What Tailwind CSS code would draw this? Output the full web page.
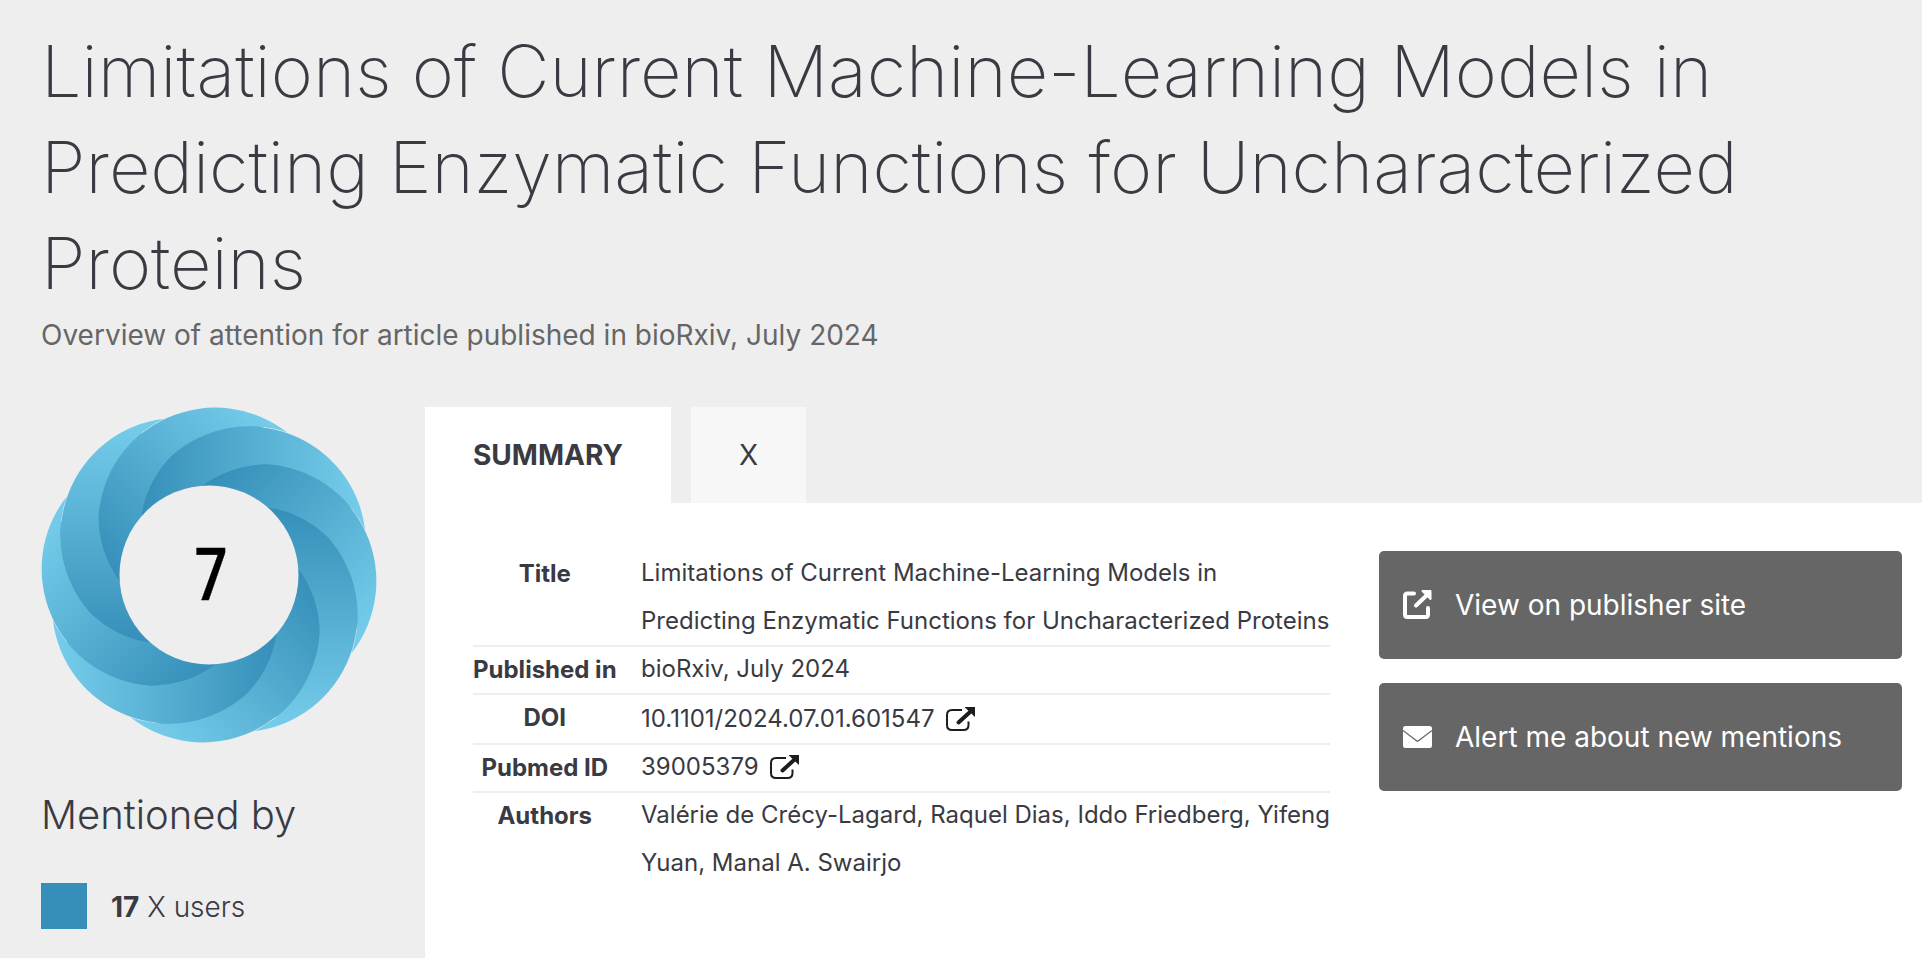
<!DOCTYPE html>
<html lang="en">
<head>
<meta charset="utf-8">
<title>Overview of attention</title>
<script src="https://cdn.jsdelivr.net/npm/@tailwindcss/browser@4"></script>
</head>
<body class="h-screen overflow-hidden bg-[#eeeeee] font-['Inter',sans-serif] text-[#3a3a42] flex flex-col">
<header class="pl-[41px] pt-[23px] h-[407px] shrink-0">
  <h1 class="text-[72px] leading-[96px] font-extralight">Limitations of Current Machine-Learning Models in<br>Predicting Enzymatic Functions for Uncharacterized<br>Proteins</h1>
  <p class="mt-px text-[28px] leading-[46px] text-[#666666]">Overview of attention for article published in bioRxiv, July 2024</p>
</header>
<div class="flex flex-1 min-h-0">
  <aside class="w-[425px] shrink-0 pl-[41px]">
    <svg class="block w-[336px] h-[336px]" viewBox="-168 -168 336 336">
      <defs>
        <linearGradient id="g" gradientUnits="userSpaceOnUse" x1="-18.9" y1="65.3" x2="43.2" y2="-150"><stop offset="0" stop-color="#368fb9"/><stop offset="1" stop-color="#76cdeb"/></linearGradient>
        <path id="r" fill="url(#g)" d="M0-162.5A117 117 0 0 0-124.9 2.7A108 108 0 0 0-30.3 58.5L-62.8 19.9A108 108 0 0 1-90.2-86.4A117 117 0 0 1 0-162.5Z"/>
      </defs>
      <circle r="157" fill="#55aad0"/>
      <use href="#r" transform="rotate(28.9)"/><use href="#r" transform="rotate(73.9)"/><use href="#r" transform="rotate(118.9)"/><use href="#r" transform="rotate(163.9)"/><use href="#r" transform="rotate(208.9)"/><use href="#r" transform="rotate(253.9)"/><use href="#r" transform="rotate(298.9)"/><use href="#r" transform="rotate(343.9)"/>
      <circle r="89.5" fill="#eeeeee"/>
      <text transform="translate(2 24.5) scale(.8 1)" text-anchor="middle" font-family="Roboto, sans-serif" font-weight="500" font-size="72" fill="#000" stroke="#000" stroke-width=".5">7</text>
    </svg>
    <h2 class="mt-[48px] text-[40px] leading-[48px] font-light">Mentioned by</h2>
    <div class="mt-[44px] flex items-start gap-6 text-[28px] leading-[46px] font-light"><span class="size-[46px] bg-[#368fb9]"></span><span class="pt-px"><b class="font-bold">17</b> X users</span></div>
  </aside>
  <main class="flex-1 flex flex-col">
    <nav class="flex gap-5 h-24 shrink-0 text-[28px] leading-[96px]">
      <a class="w-[246px] text-center bg-white font-bold">SUMMARY</a>
      <a class="w-[115px] text-center bg-[#f7f7f7]">X</a>
    </nav>
    <div class="flex-1 bg-white pl-12 pt-[46px] pr-5 flex justify-between items-start">
      <dl class="w-[857px] text-[24px] leading-[48px] whitespace-nowrap">
        <div class="flex gap-[24.5px] h-[98px] border-b-2 border-[#eeeeee]"><dt class="w-[143.5px] pt-px text-center font-bold">Title</dt><dd>Limitations of Current Machine-Learning Models in<br>Predicting Enzymatic Functions for Uncharacterized Proteins</dd></div>
        <div class="flex gap-[24.5px] h-[48px] border-b-2 border-[#eeeeee] leading-[44px]"><dt class="w-[143.5px] pt-px text-center font-bold">Published in</dt><dd>bioRxiv, July 2024</dd></div>
        <div class="flex gap-[24.5px] h-[50px] border-b-2 border-[#eeeeee]"><dt class="w-[143.5px] text-center font-bold leading-[46px]">DOI</dt><dd class="flex gap-3">10.1101/2024.07.01.601547
          <svg class="w-[30px] h-[24px] mt-3" viewBox="0 0 30 24"><path d="M16 3H6Q1 3 1 8V18Q1 23 6 23H17.500Q22.500 23 22.500 18V14.500" fill="none" stroke="#1d1d1f" stroke-width="2"/><path d="M12.500 15.500L24 5" stroke="#1d1d1f" stroke-width="4" stroke-linecap="round"/><path d="M18.500 0H29V10Z" fill="#1d1d1f"/></svg></dd></div>
        <div class="flex gap-[24.5px] h-[48px] border-b-2 border-[#eeeeee] leading-[44px]"><dt class="w-[143.5px] pt-px text-center font-bold">Pubmed ID</dt><dd class="flex gap-[11px]">39005379
          <svg class="w-[30px] h-[24px] mt-[10px]" viewBox="0 0 30 24"><path d="M16 3H6Q1 3 1 8V18Q1 23 6 23H17.500Q22.500 23 22.500 18V14.500" fill="none" stroke="#1d1d1f" stroke-width="2"/><path d="M12.500 15.500L24 5" stroke="#1d1d1f" stroke-width="4" stroke-linecap="round"/><path d="M18.500 0H29V10Z" fill="#1d1d1f"/></svg></dd></div>
        <div class="flex gap-[24.5px] -mt-0.5"><dt class="w-[143.5px] pt-px text-center font-bold">Authors</dt><dd>Valérie de Crécy-Lagard, Raquel Dias, Iddo Friedberg, Yifeng<br>Yuan, Manal A. Swairjo</dd></div>
      </dl>
      <div class="w-[523px] mt-0.5 flex flex-col gap-6 text-white text-[28px]">
        <a class="h-[108px] bg-[#666666] rounded-[5px] flex items-center pl-6 gap-[23px]">
          <svg class="w-[29px] h-[29px] mb-px" viewBox="0 0 29 29" fill="none" stroke="#fff" stroke-linecap="round" stroke-linejoin="round"><path d="M11 3.500H4.500Q2 3.500 2 6V24.500Q2 27 4.500 27H22.500Q25 27 25 24.500V18" stroke-width="4"/><path d="M13 15.500L24 5" stroke-width="4"/><path d="M19.500 1H27.500V9Z" fill="#fff" stroke-width="2"/></svg><span>View on publisher site</span></a>
        <a class="h-[108px] bg-[#666666] rounded-[5px] flex items-center pl-6 gap-[23px]">
          <svg class="w-[29px] h-[22px]" viewBox="0 0 29 22"><rect width="29" height="22" rx="2.500" fill="#fff"/><path d="M0 4.500L12.500 14Q14.500 16 16.500 14L29 4.500" fill="none" stroke="#666" stroke-width="1.200"/></svg><span>Alert me about new mentions</span></a>
      </div>
    </div>
  </main>
</div>
</body>
</html>
